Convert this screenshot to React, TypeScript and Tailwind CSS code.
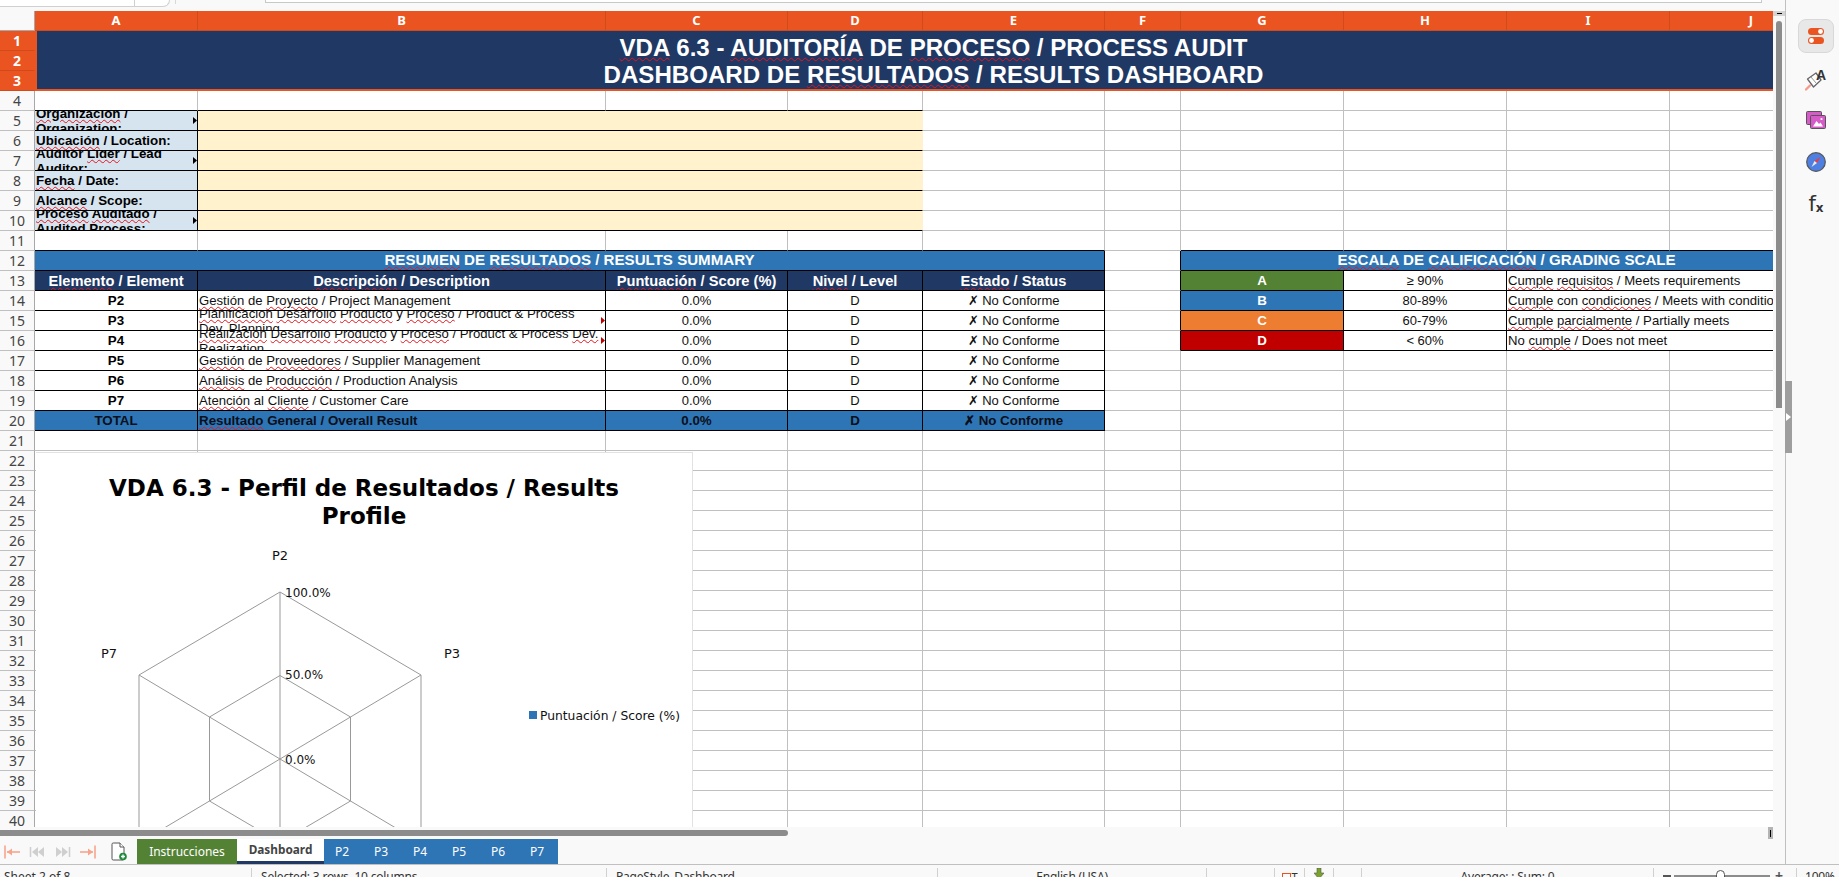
import React from "react";

const W = ({ children }: { children: React.ReactNode }) => (
  <span className="underline decoration-wavy decoration-[#e8141c] decoration-1 underline-offset-[1px]">{children}</span>
);

type CellProps = {
  className?: string;
  rb?: boolean;
  bb?: boolean;
  fill?: boolean;
  children?: React.ReactNode;
};

const Cell = ({ className = "", rb = false, bb = false, fill = false, children }: CellProps) => (
  <div
    className={`relative flex min-w-0 items-center overflow-hidden border-r border-b ${fill ? "border-r-[#fff2cc]" : rb ? "border-r-black" : "border-r-[#c0c0c0]"} ${bb ? "border-b-black" : "border-b-[#c0c0c0]"} ${className}`}
  >
    {children}
  </div>
);

const Flag = ({ color }: { color: string }) => (
  <svg className="absolute right-0 top-[6px]" width="4" height="7" viewBox="0 0 4 7">
    <path d="M0 0L4 3.5L0 7Z" fill={color} />
  </svg>
);

const COLS = ["A", "B", "C", "D", "E", "F", "G", "H", "I", "J"];
const label = "bg-[#d6e4f0] font-bold px-[1px] leading-[15px] text-[13.33px]";
const head = "bg-[#1f3864] text-white font-bold justify-center text-[14.67px]";
const body = "justify-center text-[13px] text-[#111]";
const left = "px-[1px] text-[13.15px] leading-[15px] text-[#111]";

const Blanks = ({ n, bb = false }: { n: number; bb?: boolean }) => (
  <>
    {Array.from({ length: n }).map((_, i) => (
      <Cell key={i} bb={bb} />
    ))}
  </>
);

const RowNum = ({ n, on = false }: { n: number; on?: boolean }) => (
  <div
    className={`flex items-center justify-center border-r border-b font-['Noto_Sans',sans-serif] text-[14px] ${on ? "border-r-[#e95420] border-b-[#d14a1c] bg-[#e95420] font-bold text-white" : "border-r-[#a8a8a8] border-b-[#c0c0c0] bg-[#f9f9f9] text-[#444]"}`}
  >
    {n}
  </div>
);

const infoRows: { n: number; text: React.ReactNode; flag?: boolean }[] = [
  { n: 5, text: <><W>Organización</W> / Organization:</>, flag: true },
  { n: 6, text: <><W>Ubicación</W> / Location:</> },
  { n: 7, text: <>Auditor <W>Líder</W> / Lead Auditor:</>, flag: true },
  { n: 8, text: <><W>Fecha</W> / Date:</> },
  { n: 9, text: <><W>Alcance</W> / Scope:</> },
  { n: 10, text: <><W>Proceso</W> <W>Auditado</W> / Audited Process:</>, flag: true },
];

const results: { n: number; p: string; text: React.ReactNode; flag?: boolean }[] = [
  { n: 14, p: "P2", text: <><W>Gestión</W> de <W>Proyecto</W> / Project Management</> },
  { n: 15, p: "P3", text: <><W>Planificación</W> <W>Desarrollo</W> <W>Producto</W> y <W>Proceso</W> / Product &amp; Process<br />Dev. Planning</>, flag: true },
  { n: 16, p: "P4", text: <><W>Realización</W> <W>Desarrollo</W> <W>Producto</W> y <W>Proceso</W> / Product &amp; Process <W>Dev.</W><br />Realization</>, flag: true },
  { n: 17, p: "P5", text: <><W>Gestión</W> de <W>Proveedores</W> / Supplier Management</> },
  { n: 18, p: "P6", text: <><W>Análisis</W> de <W>Producción</W> / Production Analysis</> },
  { n: 19, p: "P7", text: <><W>Atención</W> al <W>Cliente</W> / Customer Care</> },
];

const grades: { n: number; g: string; bg: string; range: string; text: React.ReactNode }[] = [
  { n: 13, g: "A", bg: "bg-[#548235]", range: "≥ 90%", text: <><W>Cumple</W> <W>requisitos</W> / Meets requirements</> },
  { n: 14, g: "B", bg: "bg-[#2e75b6]", range: "80-89%", text: <><W>Cumple</W> con <W>condiciones</W> / Meets with conditions</> },
  { n: 15, g: "C", bg: "bg-[#ed7d31]", range: "60-79%", text: <><W>Cumple</W> <W>parcialmente</W> / Partially meets</> },
  { n: 16, g: "D", bg: "bg-[#c00000]", range: "< 60%", text: <>No <W>cumple</W> / Does not meet</> },
];

const GradeCells = ({ n }: { n: number }) => {
  const g = grades.find((x) => x.n === n);
  if (!g) return <><Cell /><Blanks n={4} /></>;
  return (
    <>
      <Cell rb />
      <Cell rb bb className={`${g.bg} justify-center text-[13.33px] font-bold text-white`}>{g.g}</Cell>
      <Cell rb bb className={body}>{g.range}</Cell>
      <Cell bb className={`col-span-2 whitespace-nowrap ${left}`}><div>{g.text}</div></Cell>
    </>
  );
};

const Radar = () => {
  const cx = 244;
  const cy = 306;
  const pts = (s: number) =>
    [[0, -167], [141, -84], [141, 84], [0, 167], [-141, 84], [-141, -84]]
      .map(([x, y]) => `${cx + x * s},${cy + y * s}`)
      .join(" ");
  return (
    <svg className="absolute left-0 top-0" width="657" height="480" viewBox="0 0 657 480">
      <g fill="none" stroke="#999999" strokeWidth="1">
        <polygon points={pts(1)} />
        <polygon points={pts(0.5)} />
        <line x1={cx} y1={cy - 167} x2={cx} y2={cy + 167} />
        <line x1={cx - 141} y1={cy - 84} x2={cx + 141} y2={cy + 84} />
        <line x1={cx + 141} y1={cy - 84} x2={cx - 141} y2={cy + 84} />
      </g>
      <g fontFamily="'DejaVu Sans', sans-serif" fontSize="13" fill="#111">
        <text x={cx} y="107" textAnchor="middle">P2</text>
        <text x="416" y="205" textAnchor="middle">P3</text>
        <text x="73" y="205" textAnchor="middle">P7</text>
        <text x="249" y="144" fontSize="12">100.0%</text>
        <text x="249" y="226" fontSize="12">50.0%</text>
        <text x="249" y="311" fontSize="12">0.0%</text>
        <rect x="493" y="258" width="8" height="8" fill="#2e75b6" />
        <text x="504" y="267" fontSize="12.3">Puntuación / Score (%)</text>
      </g>
    </svg>
  );
};

const Row = ({ n }: { n: number }) => {
  if (n === 1) {
    return (
      <>
        <div className="row-span-3 grid grid-rows-3">
          {[1, 2, 3].map((k) => (
            <RowNum key={k} n={k} on />
          ))}
        </div>
        <div className="col-span-10 row-span-3 flex flex-col items-center justify-center border-b-2 border-l-2 border-b-[#e95420] border-l-[#e95420] bg-[#1f3864] pr-[3px] pt-[2px] text-[24.1px] font-bold leading-[27px] text-white">
          <div><W>VDA</W> 6.3 - <W>AUDITORÍA</W> DE <W>PROCESO</W> / PROCESS AUDIT</div>
          <div>DASHBOARD DE <W>RESULTADOS</W> / RESULTS DASHBOARD</div>
        </div>
      </>
    );
  }
  if (n === 2 || n === 3) return null;

  const num = <RowNum n={n} />;
  if (n === 4 || n === 11) {
    return (
      <>
        {num}
        <Blanks n={n === 4 ? 4 : 5} bb />
        {n === 4 ? <Blanks n={6} /> : <Cell />}
        {n === 11 && <Blanks n={4} bb />}
      </>
    );
  }
  const info = infoRows.find((r) => r.n === n);
  if (info) {
    return (
      <>
        {num}
        <Cell rb bb className={label}>
          <div>{info.text}</div>
          {info.flag && <Flag color="#000" />}
        </Cell>
        <Cell fill bb className="col-span-3 bg-[#fff2cc]" />
        <Blanks n={6} />
      </>
    );
  }
  if (n === 12) {
    return (
      <>
        {num}
        <Cell rb bb className="col-span-5 justify-center bg-[#2e75b6] text-[15.1px] font-bold text-white">
          <span><W>RESUMEN</W> DE <W>RESULTADOS</W> / RESULTS SUMMARY</span>
        </Cell>
        <Cell rb />
        <Cell bb className="col-span-4 justify-center bg-[#2e75b6] text-[15.1px] font-bold text-white">
          <span><W>ESCALA</W> DE <W>CALIFICACIÓN</W> / GRADING SCALE</span>
        </Cell>
      </>
    );
  }
  if (n === 13) {
    return (
      <>
        {num}
        <Cell rb bb className={head}><span><W>Elemento</W> / Element</span></Cell>
        <Cell rb bb className={head}><span><W>Descripción</W> / Description</span></Cell>
        <Cell rb bb className={head}><span><W>Puntuación</W> / Score (%)</span></Cell>
        <Cell rb bb className={head}><span><W>Nivel</W> / Level</span></Cell>
        <Cell rb bb className={head}><span><W>Estado</W> / Status</span></Cell>
        <GradeCells n={13} />
      </>
    );
  }
  const res = results.find((r) => r.n === n);
  if (res) {
    return (
      <>
        {num}
        <Cell rb bb className="justify-center text-[13.33px] font-bold">{res.p}</Cell>
        <Cell rb bb className={`whitespace-nowrap ${left}`}>
          <div>{res.text}</div>
          {res.flag && <Flag color="#c00000" />}
        </Cell>
        <Cell rb bb className={body}>0.0%</Cell>
        <Cell rb bb className={body}>D</Cell>
        <Cell rb bb className={body}>✗ No Conforme</Cell>
        <GradeCells n={n} />
      </>
    );
  }
  if (n === 20) {
    const t = "bg-[#2e75b6] justify-center text-[13.33px] font-bold text-[#0a0f1a]";
    return (
      <>
        {num}
        <Cell rb bb className={t}>TOTAL</Cell>
        <Cell rb bb className="bg-[#2e75b6] px-[1px] text-[13.33px] font-bold text-[#0a0f1a]"><span><W>Resultado</W> General / Overall Result</span></Cell>
        <Cell rb bb className={t}>0.0%</Cell>
        <Cell rb bb className={t}>D</Cell>
        <Cell rb bb className={t}>✗ No Conforme</Cell>
        <Blanks n={5} />
      </>
    );
  }
  return (
    <>
      {num}
      <Blanks n={10} />
    </>
  );
};

const Toggles = () => (
  <svg width="16" height="16" viewBox="0 0 16 16">
    <rect x="0" y="0" width="16" height="7" rx="3.5" fill="#e95420" />
    <circle cx="12.5" cy="3.5" r="2.4" fill="#fff" />
    <rect x="0" y="9" width="16" height="7" rx="3.5" fill="#e95420" />
    <circle cx="3.5" cy="12.5" r="2.4" fill="#fff" />
  </svg>
);

const BrushA = () => (
  <svg width="22" height="22" viewBox="0 0 22 22">
    <path d="M1 20.5L5 16.5" stroke="#f79a8a" strokeWidth="2.4" strokeLinecap="round" />
    <path d="M2.5 10L11 4L16 11L8.5 18Z" fill="#fff" stroke="#666" strokeWidth="1.3" strokeLinejoin="round" />
    <path d="M6 8L11 14" stroke="#999" strokeWidth="1" />
    <text x="11" y="11" fontFamily="'Liberation Sans', sans-serif" fontWeight="700" fontSize="14" fill="#333">A</text>
  </svg>
);

const Gallery = () => (
  <svg width="20" height="18" viewBox="0 0 20 18">
    <rect x="0.5" y="0.5" width="15" height="13" rx="1" fill="#d65bc9" stroke="#555" />
    <rect x="4.5" y="4.5" width="15" height="13" rx="1" fill="#d65bc9" stroke="#555" />
    <path d="M7 15.5L10.5 10L13 13L14.5 11.5L17 15.5Z" fill="#fff" />
    <circle cx="15.5" cy="8" r="1.1" fill="#fff" />
  </svg>
);

const Compass = () => (
  <svg width="20" height="20" viewBox="0 0 20 20">
    <circle cx="10" cy="10" r="9.3" fill="#4f7fe0" stroke="#555" strokeWidth="1.2" />
    <path d="M14.5 5L11 11L8.5 9Z" fill="#ef3b3b" />
    <path d="M5.5 15L8.5 9L11 11Z" fill="#e6ecf8" />
  </svg>
);

const FirstIcon = ({ color, flip = false }: { color: string; flip?: boolean }) => (
  <svg width="16" height="14" viewBox="0 0 16 14" className={flip ? "-scale-x-100" : ""}>
    <path d="M1 0.5V13.5" stroke={color} strokeWidth="1.6" />
    <path d="M3 7H16" stroke={color} strokeWidth="1.6" />
    <path d="M3 7L8 3.5V10.5Z" fill={color} />
  </svg>
);

const PrevIcon = ({ flip = false }: { flip?: boolean }) => (
  <svg width="16" height="14" viewBox="0 0 16 14" className={flip ? "-scale-x-100" : ""}>
    <path d="M1.5 2V12" stroke="#cfcfcf" strokeWidth="1.6" />
    <path d="M3 7L9 2V12Z" fill="#cfcfcf" />
    <path d="M9 7L15 2V12Z" fill="#cfcfcf" />
  </svg>
);

const NewSheet = () => (
  <svg width="16" height="19" viewBox="0 0 16 19">
    <path d="M1 2.2Q1 1 2.2 1H9L13 5V16.8Q13 18 11.8 18H2.2Q1 18 1 16.8Z" fill="#fff" stroke="#555" strokeWidth="1" />
    <path d="M9 1V5H13" fill="#fff" stroke="#555" strokeWidth="1" />
    <circle cx="12" cy="14.5" r="3.8" fill="#1e8a3a" />
    <path d="M10 14.5H14M12 12.5V16.5" stroke="#fff" strokeWidth="1.3" />
  </svg>
);

const Tab = ({ className, children }: { className: string; children: React.ReactNode }) => (
  <div className={`flex h-full items-center justify-center ${className}`}>{children}</div>
);

const StatusCell = ({ className, children }: { className: string; children?: React.ReactNode }) => (
  <div className={`mt-[3px] h-full whitespace-nowrap border-l border-l-[#d0d0d0] text-[12px] leading-[18px] tracking-[-0.2px] text-[#333] ${className}`}>
    {children}
  </div>
);

export default function App() {
  return (
    <div className="relative flex h-[877px] w-[1839px] flex-col overflow-hidden bg-[#f9f9f9] font-['Liberation_Sans',Arial,sans-serif] text-black">
      <div className="flex h-[864px] min-h-0">
        <div className="flex w-[1785px] flex-col">
          <div className="flex h-[11px]">
            <div className="flex h-[7px] w-[170px] rounded-br-lg border-r border-b border-[#d0d0d0] bg-white">
              <div className="h-full w-[135px] border-r border-[#d0d0d0]" />
            </div>
            <div className="ml-[5px] h-[4px] w-px bg-[#d8d8d8]" />
            <div className="ml-[89px] h-[3px] w-[1497px] border-x border-b border-[#c8c8c8] bg-white" />
          </div>

          <div className="flex h-[816px]">
            <div className="relative h-full w-[1773px] overflow-hidden bg-white">
              <div className="grid w-[1833px] grid-cols-[35px_163px_408px_182px_135px_182px_76px_163px_163px_163px_163px] grid-rows-[20px] auto-rows-[20px]">
                <div className="border-r border-b border-r-[#a8a8a8] border-b-[#a8a8a8] bg-[#f9f9f9]" />
                {COLS.map((c) => (
                  <div
                    key={c}
                    className="flex items-center justify-center border-r border-b border-r-[#d14a1c] border-b-[#d14a1c] bg-[#e95420] font-['Noto_Sans',sans-serif] text-[13px] font-bold text-white"
                  >
                    {c}
                  </div>
                ))}
                {Array.from({ length: 40 }).map((_, i) => (
                  <Row key={i} n={i + 1} />
                ))}
              </div>
              <div className="absolute left-[36px] top-[441px] h-[480px] w-[657px] border-r border-t border-[#e2e2e2] bg-white">
                <div className="pt-[21px] text-center font-['DejaVu_Sans',sans-serif] text-[23px] font-bold leading-[28px] text-black">
                  VDA 6.3 - Perfil de Resultados / Results<br />Profile
                </div>
                <Radar />
              </div>
            </div>
            <div className="flex w-[12px] flex-col items-center bg-[#f9f9f9]">
              <div className="flex h-[5px] w-full items-center justify-center bg-[#d4d4d4]">
                <div className="h-px w-[5px] bg-black" />
              </div>
              <div className="mt-[5px] h-[387px] w-[6px] rounded-t-sm bg-[#8c8c8c]" />
            </div>
          </div>

          <div className="flex h-[12px]">
            <div className="mt-[3px] h-[6px] w-[788px] rounded-r-sm bg-[#8c8c8c]" />
            <div className="ml-[980px] flex h-full w-[5px] items-center justify-center bg-[#b4b4b4]">
              <div className="h-[7px] w-px bg-black" />
            </div>
          </div>

          <div className="flex h-[25px] items-center">
            <div className="ml-[4px] flex w-[107px] items-center">
              <FirstIcon color="#f7a48c" />
              <div className="ml-[9px]"><PrevIcon /></div>
              <div className="ml-[10px]"><PrevIcon flip /></div>
              <div className="ml-[9px]"><FirstIcon color="#f7a48c" flip /></div>
            </div>
            <div className="w-[26px]"><NewSheet /></div>
            <div className="flex h-full font-['Noto_Sans',sans-serif] text-[12px] text-white">
              <Tab className="w-[100px] bg-[#548235]">Instrucciones</Tab>
              <Tab className="w-[87px] border-b-[3px] border-b-[#1f3864] bg-white text-[11.8px] font-bold text-[#444]">Dashboard</Tab>
              {["P2", "P3", "P4", "P5", "P6", "P7"].map((p) => (
                <Tab key={p} className="w-[39px] bg-[#2e75b6] pr-[3px]">{p}</Tab>
              ))}
            </div>
          </div>
        </div>

        <div className="w-[54px] border-l border-l-[#c0c0c0] pl-[12px] pt-[19px]">
          <div className="flex h-[34px] w-[36px] items-center justify-center rounded-lg border border-[#d8d8d8] bg-[#e8e8e8]"><Toggles /></div>
          <div className="mt-[15px] flex h-[24px] w-[36px] items-center justify-center"><BrushA /></div>
          <div className="mt-[16px] flex h-[24px] w-[36px] items-center justify-center"><Gallery /></div>
          <div className="mt-[18px] flex h-[24px] w-[36px] items-center justify-center"><Compass /></div>
          <div className="mt-[18px] flex h-[24px] w-[36px] items-center justify-center font-['DejaVu_Sans',sans-serif] text-[#333]">
            <span className="text-[21px] leading-none">f</span>
            <span className="mt-[7px] text-[12px] font-bold leading-none">x</span>
          </div>
        </div>
      </div>

      <div className="flex h-[13px] border-t border-t-[#c0c0c0] font-['Noto_Sans',sans-serif]">
        <div className="mt-[3px] w-[251px] pl-[4px] text-[12px] leading-[18px] text-[#333]">Sheet 2 of 8</div>
        <StatusCell className="w-[355px] pl-[9px]">Selected: 3 rows, 10 columns</StatusCell>
        <StatusCell className="w-[331px] pl-[9px]">PageStyle_Dashboard</StatusCell>
        <StatusCell className="w-[269px] text-center">English (USA)</StatusCell>
        <StatusCell className="w-[68px]" />
        <StatusCell className="flex w-[30px] justify-center gap-[1px]">
          <span className="mt-[5px] h-[9px] w-[9px] border border-[#e95420]" />
          <span className="text-[11px]">T</span>
        </StatusCell>
        <StatusCell className="flex w-[29px] justify-center">
          <svg width="10" height="12" viewBox="0 0 10 12"><path d="M3 0H7V5H10L5 11L0 5H3Z" fill="#7aa32a" stroke="#555" strokeWidth="0.6" /></svg>
        </StatusCell>
        <StatusCell className="w-[28px]" />
        <StatusCell className="w-[292px] text-center">Average: ; Sum: 0</StatusCell>
        <StatusCell className="flex w-[143px] pl-[9px]">
          <div className="mt-[7px] h-[2px] w-[8px] bg-[#555]" />
          <div className="relative ml-[3px] mt-[7px] h-[2px] w-[96px] bg-[#8c8c8c]">
            <div className="absolute left-[42px] top-[-5px] h-[12px] w-[9px] rounded-full border border-[#555] bg-white" />
          </div>
          <div className="ml-[5px] text-[14px] font-bold leading-[16px] text-[#555]">+</div>
        </StatusCell>
        <StatusCell className="w-[43px] pl-[8px]">100%</StatusCell>
      </div>

      <div className="absolute left-[1785px] top-[381px] flex h-[72px] w-[7px] items-center justify-center bg-[#9e9e9e]">
        <svg width="5" height="8" viewBox="0 0 5 8"><path d="M0 0L5 4L0 8Z" fill="#fff" /></svg>
      </div>
    </div>
  );
}
